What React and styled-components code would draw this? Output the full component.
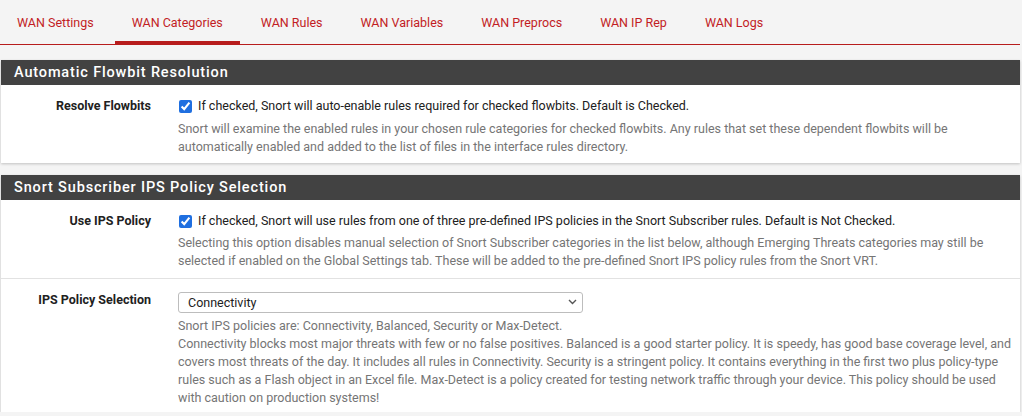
import React from "react";
import styled, { createGlobalStyle } from "styled-components";

const Global = createGlobalStyle`
  html, body { margin: 0; padding: 0; background: #f4f4f4; }
  body { font-family: Roboto, "Liberation Sans", Arial, sans-serif; color: #212121; }
  * { box-sizing: border-box; }
`;

const Page = styled.div`
  width: 1022px;
  padding: 0 2px 0 1px;
`;

const TabBar = styled.nav`
  display: flex;
  gap: 4px;
  height: 45px;
  border-bottom: 1px solid #b71c1c;
  margin: 0 0 0 -1px;
`;

const Tab = styled.a`
  display: flex;
  align-items: center;
  padding: 0 17px;
  height: 45px;
  margin-bottom: -1px;
  font-size: 12.5px;
  color: #c21d24;
  text-decoration: none;
  border-bottom: ${(p) => (p.$active ? "4px solid #b71c1c" : "1px solid transparent")};
  padding-top: ${(p) => (p.$active ? "3px" : "0")};
`;

const Panel = styled.section`
  background: #fff;
  margin-top: ${(p) => p.$mt}px;
  box-shadow: 0 1px 3px rgba(0, 0, 0, 0.14), 0 1px 2px rgba(0, 0, 0, 0.08);
`;

const PanelHeader = styled.h2`
  margin: 0;
  height: 25px;
  background: #424242;
  color: #fff;
  font-size: 14.5px;
  font-weight: 500;
  letter-spacing: 0.85px;
  line-height: 25px;
  padding-left: 13px;
`;

const Row = styled.div`
  display: grid;
  grid-template-columns: 150px 1fr;
  column-gap: 27px;
  padding: 12px 0 ${(p) => p.$pb || 7}px;
  border-top: ${(p) => (p.$divider ? "1px solid #e2e2e2" : "none")};
`;

const Label = styled.div`
  text-align: right;
  font-size: 12.5px;
  font-weight: 700;
  line-height: 18px;
  color: #212121;
`;

const Content = styled.div`
  font-size: 12.5px;
  line-height: 18px;
`;

const CheckLine = styled.label`
  display: flex;
  align-items: center;
  color: #212121;
`;

const Check = styled.input`
  width: 13px;
  height: 13px;
  margin: 0 6px 0 1px;
  accent-color: #1f6fe0;
`;

const Help = styled.div`
  color: #757575;
  margin-top: ${(p) => p.$mt ?? 4}px;
  white-space: nowrap;
`;

const SelectWrap = styled.div`
  position: relative;
  width: 405px;
  margin-top: 1px;
`;

const Select = styled.select`
  appearance: none;
  width: 100%;
  height: 21px;
  border: 1px solid #bdbdbd;
  border-radius: 3px;
  background: #fff;
  font-family: Roboto, "Liberation Sans", Arial, sans-serif;
  font-size: 12.5px;
  color: #212121;
  padding: 0 0 0 9px;
  outline: none;
`;

const Chevron = styled.svg`
  position: absolute;
  right: 6px;
  top: 7px;
  pointer-events: none;
`;

const tabs = [
  "WAN Settings",
  "WAN Categories",
  "WAN Rules",
  "WAN Variables",
  "WAN Preprocs",
  "WAN IP Rep",
  "WAN Logs",
];

export default function App() {
  return (
    <Page>
      <Global />
      <TabBar>
        {tabs.map((t) => (
          <Tab key={t} $active={t === "WAN Categories"}>
            {t}
          </Tab>
        ))}
      </TabBar>

      <Panel $mt={15}>
        <PanelHeader>Automatic Flowbit Resolution</PanelHeader>
        <Row>
          <Label>Resolve Flowbits</Label>
          <Content>
            <CheckLine>
              <Check type="checkbox" defaultChecked />
              If checked, Snort will auto-enable rules required for checked flowbits. Default is Checked.
            </CheckLine>
            <Help $mt={5}>
              Snort will examine the enabled rules in your chosen rule categories for checked flowbits. Any rules that set these dependent flowbits will be
              <br />
              automatically enabled and added to the list of files in the interface rules directory.
            </Help>
          </Content>
        </Row>
      </Panel>

      <Panel $mt={12}>
        <PanelHeader>Snort Subscriber IPS Policy Selection</PanelHeader>
        <Row $pb={8}>
          <Label>Use IPS Policy</Label>
          <Content>
            <CheckLine>
              <Check type="checkbox" defaultChecked />
              If checked, Snort will use rules from one of three pre-defined IPS policies in the Snort Subscriber rules. Default is Not Checked.
            </CheckLine>
            <Help>
              Selecting this option disables manual selection of Snort Subscriber categories in the list below, although Emerging Threats categories may still be
              <br />
              selected if enabled on the Global Settings tab. These will be added to the pre-defined Snort IPS policy rules from the Snort VRT.
            </Help>
          </Content>
        </Row>
        <Row $divider $pb={5}>
          <Label>IPS Policy Selection</Label>
          <Content>
            <SelectWrap>
              <Select defaultValue="connectivity">
                <option value="connectivity">Connectivity</option>
                <option value="balanced">Balanced</option>
                <option value="security">Security</option>
                <option value="max-detect">Max-Detect</option>
              </Select>
              <Chevron width="9" height="6" viewBox="0 0 9 6">
                <path d="M1 1l3.5 3.5L8 1" fill="none" stroke="#555" strokeWidth="1.4" />
              </Chevron>
            </SelectWrap>
            <Help>
              Snort IPS policies are: Connectivity, Balanced, Security or Max-Detect.
              <br />
              Connectivity blocks most major threats with few or no false positives. Balanced is a good starter policy. It is speedy, has good base coverage level, and
              <br />
              covers most threats of the day. It includes all rules in Connectivity. Security is a stringent policy. It contains everything in the first two plus policy-type
              <br />
              rules such as a Flash object in an Excel file. Max-Detect is a policy created for testing network traffic through your device. This policy should be used
              <br />
              with caution on production systems!
            </Help>
          </Content>
        </Row>
      </Panel>
    </Page>
  );
}
